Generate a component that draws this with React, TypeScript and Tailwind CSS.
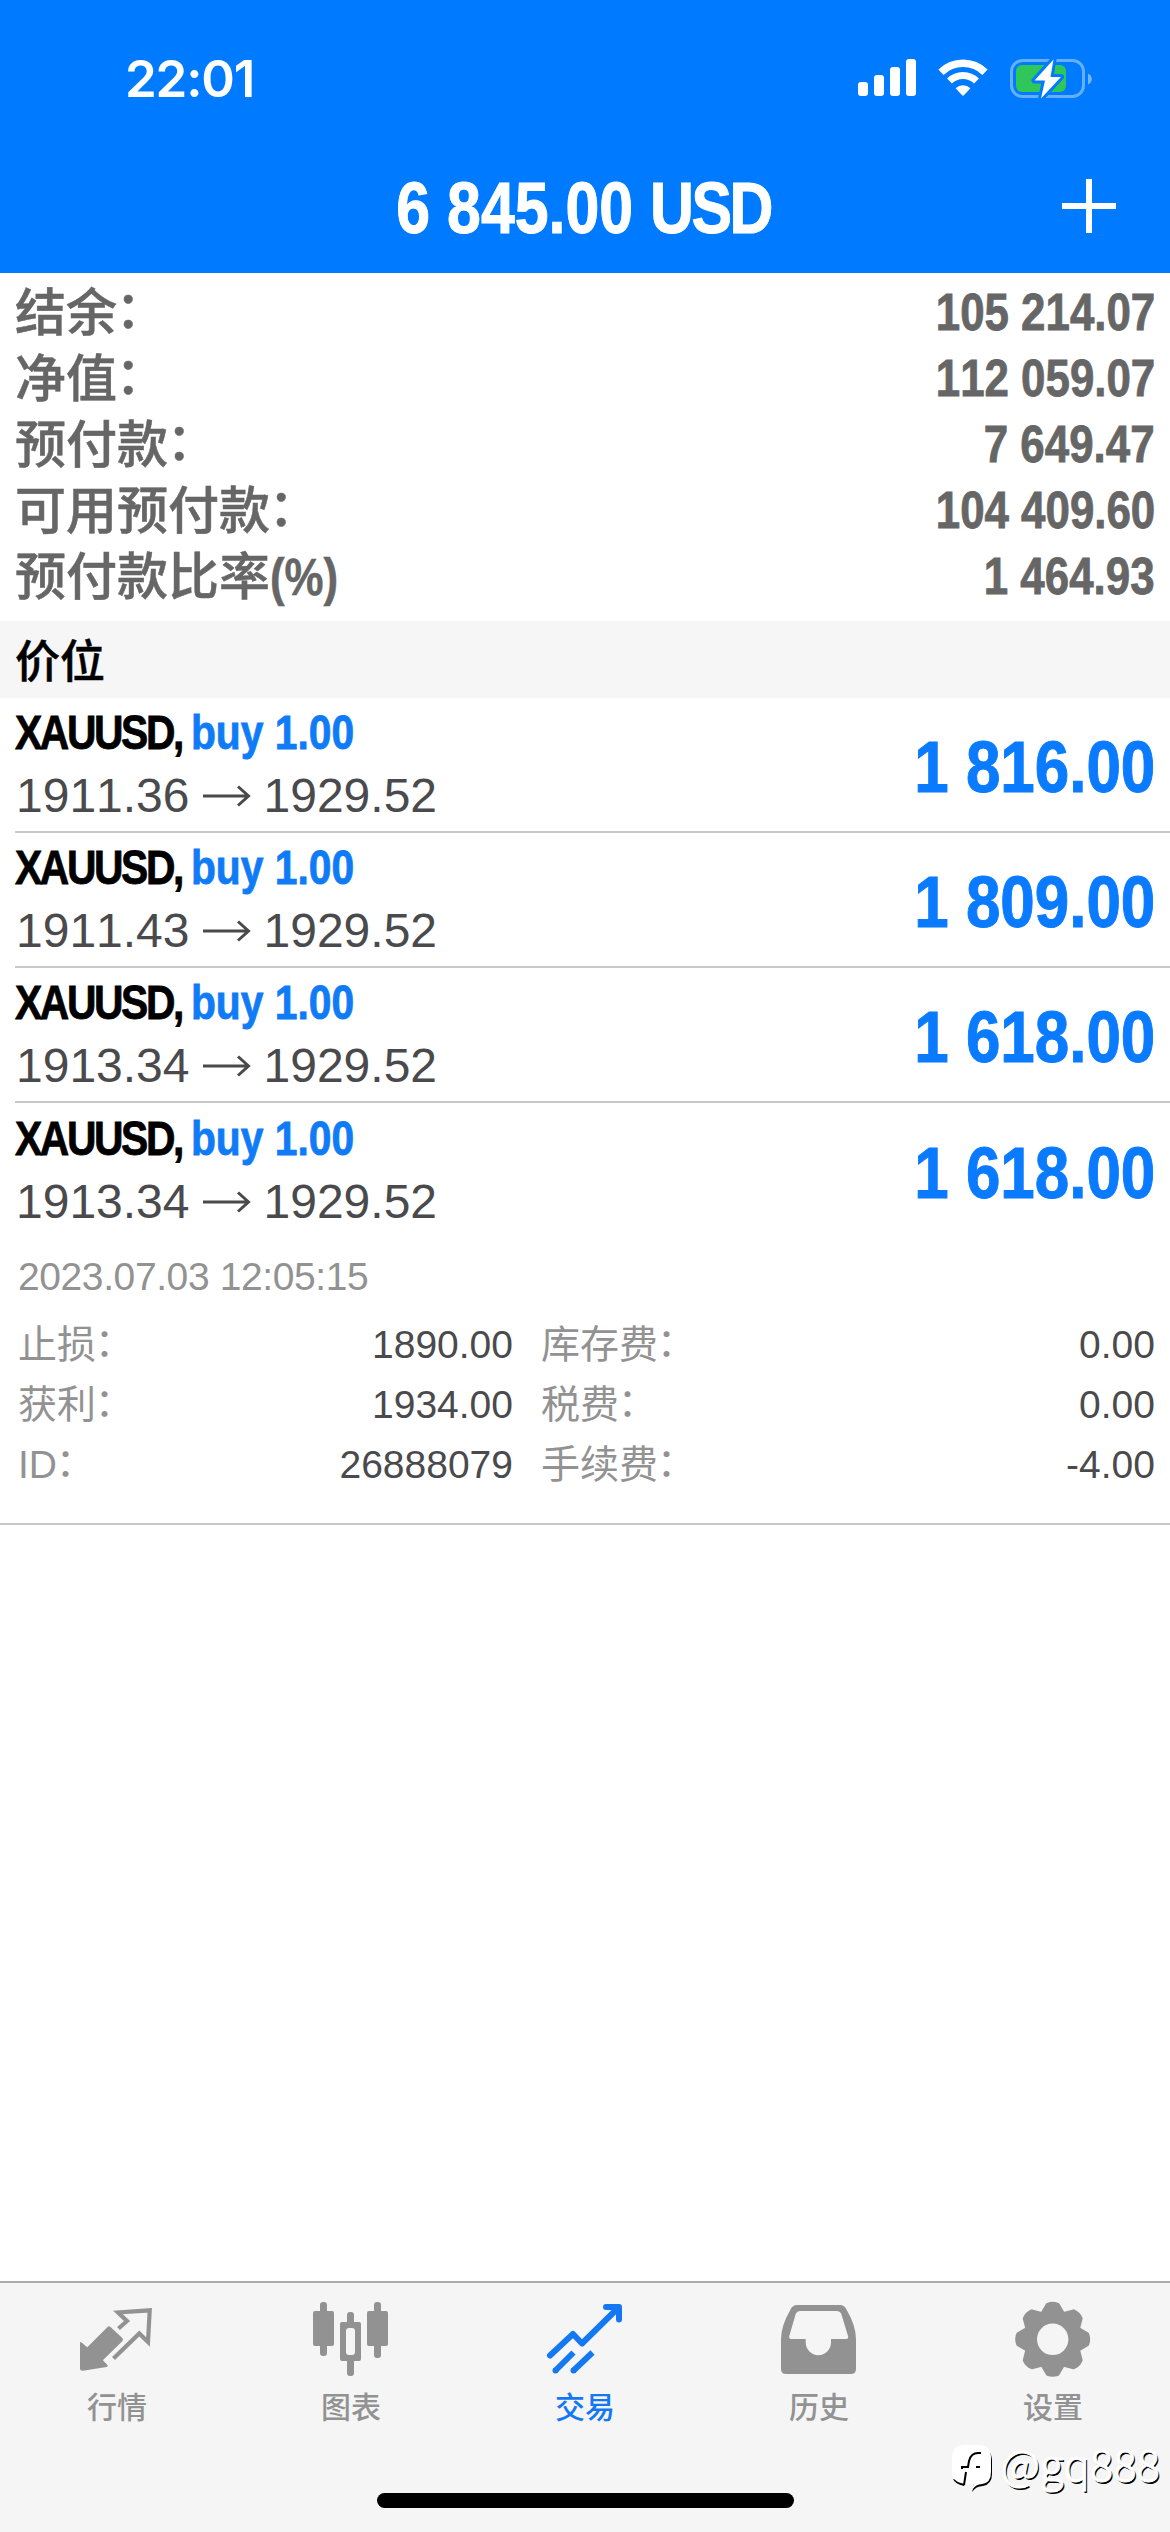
import type { ReactNode } from 'react';
import clsx from 'clsx';

const account = [
    { label: '结余', suffix: '：', value: '105 214.07' },
    { label: '净值', suffix: '：', value: '112 059.07' },
    { label: '预付款', suffix: '：', value: '7 649.47' },
    { label: '可用预付款', suffix: '：', value: '104 409.60' },
    { label: '预付款比率', suffix: '(%)', value: '1 464.93' },
];

const positions = [
    { id: 1, open: '1911.36', current: '1929.52', profit: '1 816.00' },
    { id: 2, open: '1911.43', current: '1929.52', profit: '1 809.00' },
    { id: 3, open: '1913.34', current: '1929.52', profit: '1 618.00' },
    { id: 4, open: '1913.34', current: '1929.52', profit: '1 618.00' },
];

const details = [
    ['止损', '1890.00', '库存费', '0.00'],
    ['获利', '1934.00', '税费', '0.00'],
    ['ID', '26888079', '手续费', '-4.00'],
];

function SignalIcon() {
    return (
        <svg width="58" height="38" viewBox="0 0 58 38" fill="white">
            <rect x="0" y="23" width="10" height="14" rx="3" />
            <rect x="16" y="16" width="10" height="21" rx="3" />
            <rect x="32" y="8" width="10" height="29" rx="3" />
            <rect x="48" y="0" width="10" height="37" rx="3" />
        </svg>
    );
}

function WifiIcon() {
    return (
        <svg width="50" height="38" viewBox="0 0 50 38" fill="none" stroke="white">
            <path d="M3 13.2a31.5 31.5 0 0 1 44 0" strokeWidth="7.5" />
            <path d="M11.5 22a19.2 19.2 0 0 1 27 0" strokeWidth="7" />
            <path d="M17.6 29.2a10.6 10.6 0 0 1 14.8 0L25.9 36.2q-.9.9-1.8 0z" fill="white" stroke="none" />
        </svg>
    );
}

function BatteryIcon() {
    return (
        <svg width="84" height="44" viewBox="0 0 84 44">
            <rect x="1.5" y="4.5" width="72" height="36" rx="11" fill="none" stroke="white" strokeOpacity=".4" strokeWidth="3" />
            <rect x="6" y="9" width="50" height="27" rx="6" fill="#30c75a" />
            <path d="M78 17.5c5 2 5 9 0 11z" fill="white" fillOpacity=".45" />
            <path
                d="M43.5 3.5 24.5 24.5H35L31 42.500 51 21H40.500z"
                fill="white"
                stroke="#007bff"
                strokeWidth="6"
                strokeLinejoin="round"
                paintOrder="stroke"
            />
        </svg>
    );
}

function TabIcon({ children }: { children: ReactNode }) {
    return (
        <svg width="78" height="78" viewBox="0 0 78 78" fill="currentColor">
            {children}
        </svg>
    );
}

function QuotesIcon() {
    return (
        <TabIcon>
            <path d="M2 42.500q.6-1 1.500 0l5.800 4.800L29.500 27q1.500-1.500 3 0L44.300 38q1.500 1.500 0 3.200L24.800 60.300l4.700 4.700q.8 1.500-1 2L5 70.800q-3 .2-3-2z" />
            <path d="M40.500 28.500 49 21l-9-8.500 31.700-2.200L70 42l-8.700-8.500L35.500 58.500" fill="none" stroke="currentColor" strokeWidth="4.200" />
        </TabIcon>
    );
}

function ChartIcon() {
    return (
        <TabIcon>
            <rect x="8" y="2" width="7" height="54" rx="3" />
            <rect x="1" y="11" width="21" height="35" rx="2" />
            <rect x="35" y="12" width="7" height="64" rx="3" />
            <rect x="28" y="22" width="21" height="39" rx="2" />
            <rect x="34" y="28" width="9" height="27" rx="3" fill="#f5f5f5" />
            <rect x="62" y="2" width="7" height="56" rx="3" />
            <rect x="55" y="11" width="21" height="35" rx="2" />
        </TabIcon>
    );
}

function TradeIcon() {
    return (
        <TabIcon>
            <g fill="none" stroke="currentColor" strokeWidth="6" strokeLinejoin="round">
                <path d="M4 55.500 27 34l9 9.500L72.500 7.500" strokeLinecap="round" />
                <path d="M60 7h13v12.500" strokeLinecap="round" />
                <path d="M9 71 27.500 52.500" />
                <path d="M27 71 46.500 52.500" />
            </g>
            <circle cx="9.500" cy="70.500" r="3" />
            <circle cx="27.500" cy="70.500" r="3" />
        </TabIcon>
    );
}

function HistoryIcon() {
    return (
        <TabIcon>
            <path
                fillRule="evenodd"
                d="M17 5h43q4.500 0 6.500 4.500Q76 26 76 39v30q0 5-5 5H6q-5 0-5-5V39Q1 26 10.500 9.500 12.500 5 17 5zM20.500 11q-3.500 0-4.800 3L9.300 36q-.6 3 2 3h14.400v3.500a12.600 12.600 0 0 0 25.300 0V39h15q3 0 2-3L61.300 14q-1.300-3-4.800-3z"
            />
        </TabIcon>
    );
}

function SettingsIcon() {
    return (
        <TabIcon>
            <g transform="translate(38.700 39.300)">
                {[0, 45, 90, 135, 180, 225, 270, 315].map((angle) => (
                    <path
                        key={angle}
                        transform={`rotate(${angle})`}
                        d="M-10-26-5-34.500Q0-36.500 5-34.500L10-26z"
                        stroke="currentColor"
                        strokeWidth="4"
                        strokeLinejoin="round"
                    />
                ))}
                <circle r="28" />
                <circle r="15.700" fill="#f5f5f5" />
            </g>
        </TabIcon>
    );
}

const tabs = [
    { label: '行情', icon: <QuotesIcon /> },
    { label: '图表', icon: <ChartIcon /> },
    { label: '交易', icon: <TradeIcon />, active: true },
    { label: '历史', icon: <HistoryIcon /> },
    { label: '设置', icon: <SettingsIcon /> },
];

function Header() {
    return (
        <header className="h-[273px] bg-[#007bff] text-white">
            <div className="flex h-[156px] items-center justify-between pl-[125px] pr-[76px]">
                <span className="font-[Inter,sans-serif] text-[51px] font-semibold leading-none tracking-[-1.2px]">22:01</span>
                <div className="flex items-center gap-[22px]">
                    <SignalIcon />
                    <WifiIcon />
                    <BatteryIcon />
                </div>
            </div>
            <div className="grid h-[104px] grid-cols-[1fr_auto_1fr] items-center pr-[54px]">
                <span />
                <h1 className="ml-[52px] scale-x-[.845] whitespace-nowrap text-[72px] font-bold leading-none [-webkit-text-stroke:1px_currentColor]">
                    6 845.00 <span className="tracking-[-3px]">USD</span>
                </h1>
                <svg className="mb-[4px] justify-self-end" width="54" height="54" viewBox="0 0 54 54" stroke="white" strokeWidth="6">
                    <path d="M27 0v54M0 27h54" />
                </svg>
            </div>
        </header>
    );
}

function Colon() {
    return <span className="inline-block -translate-x-[.03em] -translate-y-[.06em]">：</span>;
}

function AccountSummary() {
    return (
        <section className="h-[348px] pl-[15px] pr-[15px] pt-[6px] text-[#666]">
            {account.map((row) => (
                <div key={row.label} className="flex h-[66px] items-center justify-between text-[51px] font-bold leading-none">
                    <span className="mt-[3px] flex items-center font-medium [-webkit-text-stroke:.5px_currentColor]">
                        {row.label}
                        {row.suffix === '：' ? (
                            <Colon />
                        ) : (
                            <span className="origin-left scale-x-[.86] font-bold">{row.suffix}</span>
                        )}
                    </span>
                    <span className="origin-right scale-x-[.86] [-webkit-text-stroke:.8px_currentColor]">{row.value}</span>
                </div>
            ))}
        </section>
    );
}

function PositionRow({ open, current, profit, last }: { open: string; current: string; profit: string; last: boolean }) {
    return (
        <div className={clsx('ml-[15px] flex h-[135px] items-center justify-between pr-[15px]', !last && 'border-b-2 border-[#c8c7cc]')}>
            <div>
                <div className="origin-left scale-x-[.85] whitespace-nowrap text-[48px] font-bold leading-[62px] [-webkit-text-stroke:.8px_currentColor]">
                    <span className="tracking-[-2.8px] text-black">XAUUSD, </span>
                    <span className="text-[#107bf6]">buy 1.00</span>
                </div>
                <div className="flex items-center pl-px text-[48px] leading-[63px] text-[#4a4a4d]">
                    <span>{open}</span>
                    <svg className="mx-[13px]" width="48" height="22" viewBox="0 0 48 22" fill="none" stroke="currentColor" strokeWidth="3">
                        <path d="M0 11h45M35 1.500l10.500 9.500L35 20.500" />
                    </svg>
                    <span>{current}</span>
                </div>
            </div>
            <span className="mt-[5px] origin-right scale-x-[.86] whitespace-nowrap text-[72px] font-bold leading-none text-[#0a7bff] [-webkit-text-stroke:1px_currentColor]">
                {profit}
            </span>
        </div>
    );
}

function PositionDetails() {
    return (
        <div className="h-[287px] border-b-2 border-[#c8c7cc] pl-[18px] pr-[15px] pt-[15px] text-[39px] text-[#929292]">
            <div className="mb-[13px] h-[48px] leading-[48px] tracking-[-0.4px]">2023.07.03 12:05:15</div>
            {details.map(([leftLabel, leftValue, rightLabel, rightValue]) => (
                <div key={leftLabel} className="grid h-[60px] grid-cols-[495px_1fr] items-center gap-x-[28px] leading-none">
                    <div className="flex justify-between">
                        <span>
                            {leftLabel}
                            <Colon />
                        </span>
                        <span className="text-[#4a4a4d]">{leftValue}</span>
                    </div>
                    <div className="flex justify-between">
                        <span>
                            {rightLabel}
                            <Colon />
                        </span>
                        <span className="text-[#4a4a4d]">{rightValue}</span>
                    </div>
                </div>
            ))}
        </div>
    );
}

function Watermark() {
    return (
        <div className="absolute bottom-[39px] right-[10px] flex items-center gap-[7px]">
            <svg width="42" height="48" viewBox="0 0 42 48" fill="none">
                <path d="M14 3h13q13 0 13 13v13q0 10-9 12-7 0-11 6l2-7z" fill="black" />
                <path d="M1 34q2 5 11 7l1-4z" fill="black" />
                <path d="M13 0h13q13 0 13 13v14q0 11-9 12-6 0-10 6l2-6h-8Q0 38 0 26V13Q0 0 13 0z" fill="white" />
                <path d="M29 8h-3q-7 0-9 8l-1 6h-6v2M24 22h4M14 27l-2 13" stroke="black" strokeWidth="2" />
            </svg>
            <span className="-mt-[14px] font-['Noto_Sans_CJK_SC',sans-serif] text-[43px] font-light leading-[48px] tracking-[0.3px] text-white [-webkit-text-stroke:1px_white] [text-shadow:1.5px_1.5px_0_#000]">
                @gq888
            </span>
        </div>
    );
}

function TabBar() {
    return (
        <nav className="relative h-[251px] border-t-2 border-[#adadad] bg-[#f5f5f5]">
            <div className="flex pt-[17px]">
                {tabs.map((tab) => (
                    <div
                        key={tab.label}
                        className={clsx('flex flex-1 flex-col items-center', tab.active ? 'text-[#1478f2]' : 'text-[#929292]')}
                    >
                        {tab.icon}
                        <span className="mt-[11px] font-['Noto_Sans_CJK_SC',sans-serif] text-[30px] font-medium leading-[32px]">{tab.label}</span>
                    </div>
                ))}
            </div>
            <div className="absolute bottom-[24px] left-[377px] h-[15px] w-[417px] rounded-full bg-black" />
            <Watermark />
        </nav>
    );
}

export default function App() {
    return (
        <div className="flex h-[2532px] w-[1170px] flex-col overflow-hidden bg-white font-['Liberation_Sans','Noto_Sans_CJK_SC',sans-serif] [font-kerning:none]">
            <Header />
            <AccountSummary />
            <div className="flex h-[77px] items-center bg-[#f6f6f6] pb-[3px] pl-[15px] font-['Noto_Sans_CJK_SC',sans-serif] text-[45px] font-medium leading-none text-black [-webkit-text-stroke:.5px_currentColor]">
                价位
            </div>
            <main className="flex-1">
                {positions.map((position, index) => (
                    <PositionRow
                        key={position.id}
                        open={position.open}
                        current={position.current}
                        profit={position.profit}
                        last={index === positions.length - 1}
                    />
                ))}
                <PositionDetails />
            </main>
            <TabBar />
        </div>
    );
}
